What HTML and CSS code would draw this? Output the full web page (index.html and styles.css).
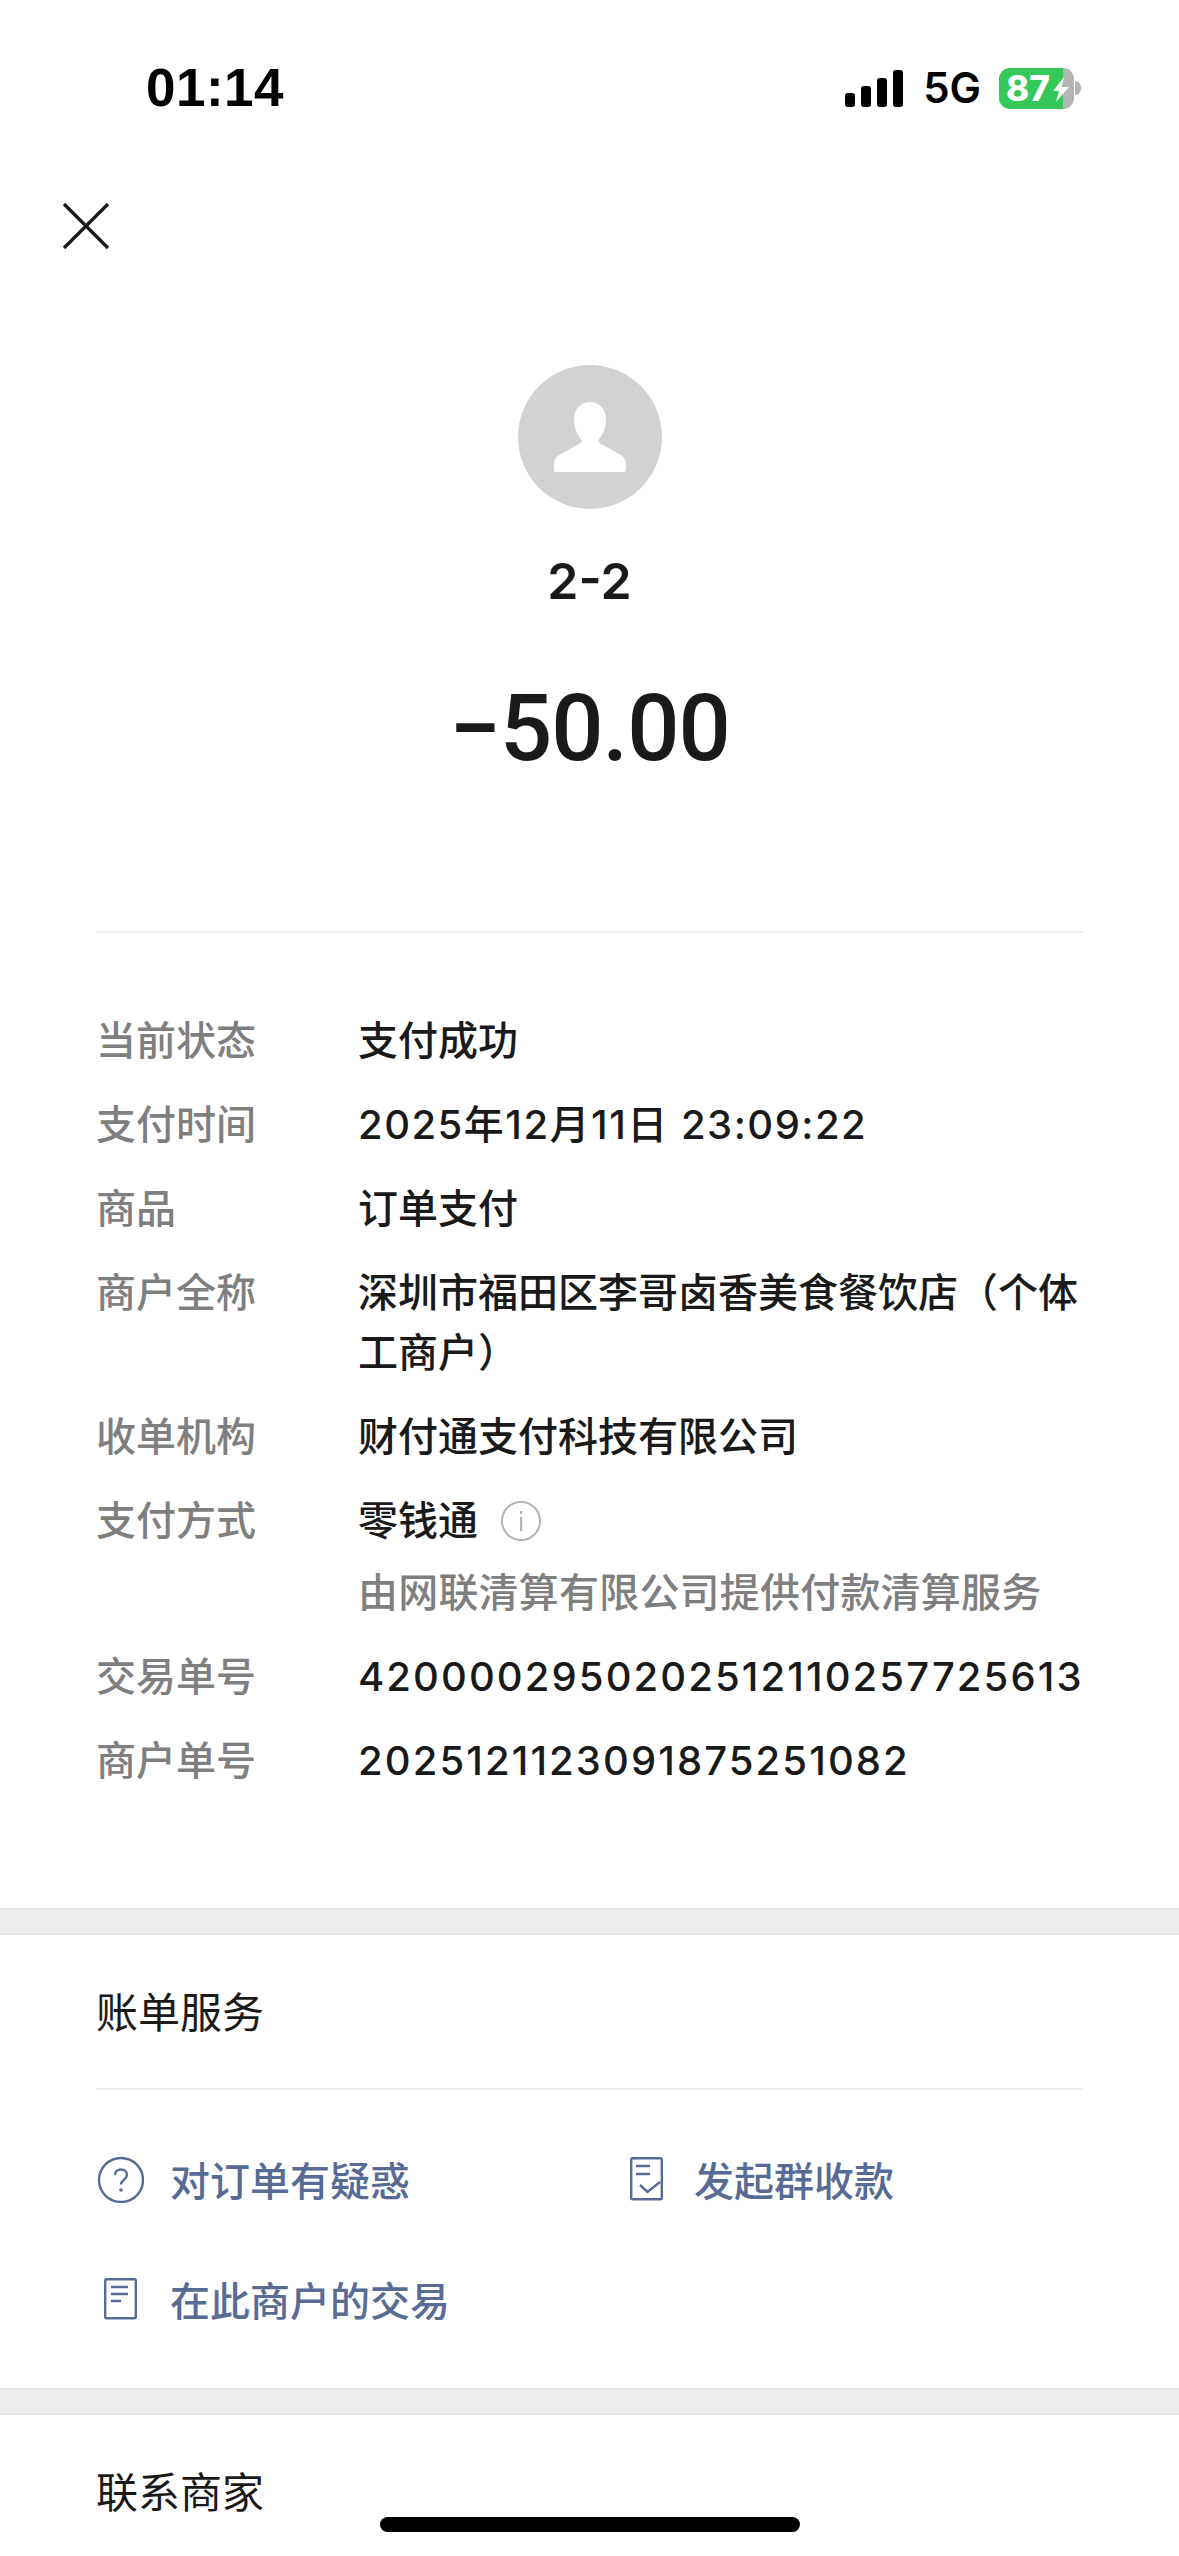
FILE: index.html
```html
<!DOCTYPE html>
<html lang="zh-CN">
<head>
  <meta charset="UTF-8" />
  <title>账单详情</title>
  <link rel="stylesheet" href="styles.css">
</head>
<body>
  <div class="page">
    <div class="status-bar">
      <span class="time">01:14</span>
      <div class="status-right">
        <svg class="signal" width="58" height="37" viewBox="0 0 58 37">
          <rect x="0" y="23" width="10" height="14" rx="3"/>
          <rect x="16" y="16" width="10" height="21" rx="3"/>
          <rect x="32" y="8" width="10" height="29" rx="3"/>
          <rect x="48" y="0" width="10" height="37" rx="3"/>
        </svg>
        <span class="network">5G</span>
        <div class="battery">
          <div class="battery-body">
            <span class="battery-level">87</span>
            <svg class="bolt" width="16" height="25" viewBox="0 0 16 25"><path d="M11 0 0 14h6L3 25 16 10H9z"/></svg>
          </div>
          <div class="battery-cap"></div>
        </div>
      </div>
    </div>

    <div class="nav">
      <svg width="50" height="50" viewBox="0 0 50 50"><path d="M3 3 47 47M47 3 3 47" stroke="#1a1a1a" stroke-width="3.4" fill="none"/></svg>
    </div>

    <div class="summary">
      <div class="avatar">
        <svg width="72" height="70" viewBox="0 0 72 70"><path d="M36 0c-9 0-16 7-16 17 0 9 3 15 7 20 1 2 0 4-2 5L7 52c-4 2-7 5-7 10v6c0 1 1 2 2 2h68c1 0 2-1 2-2v-6c0-5-3-8-7-10L47 42c-2-1-3-3-2-5 4-5 7-11 7-20C52 7 45 0 36 0z"/></svg>
      </div>
      <div class="payee">2-2</div>
      <div class="amount">−50.00</div>
    </div>

    <div class="details">
      <div class="row"><span class="label">当前状态</span><span class="value">支付成功</span></div>
      <div class="row"><span class="label">支付时间</span><span class="value date">2025年12月11日 23:09:22</span></div>
      <div class="row"><span class="label">商品</span><span class="value">订单支付</span></div>
      <div class="row"><span class="label">商户全称</span><span class="value">深圳市福田区李哥卤香美食餐饮店（个体工商户）</span></div>
      <div class="row"><span class="label">收单机构</span><span class="value">财付通支付科技有限公司</span></div>
      <div class="row">
        <span class="label">支付方式</span>
        <div class="value">
          <div class="pay-method">零钱通
            <svg width="40" height="40" viewBox="0 0 40 40"><circle cx="20" cy="20" r="19" fill="none" stroke="#b4b4b4" stroke-width="2"/><rect x="19" y="10" width="2.2" height="3" fill="#b4b4b4"/><rect x="19" y="16" width="2.2" height="14" fill="#b4b4b4"/></svg>
          </div>
          <div class="value-note">由网联清算有限公司提供付款清算服务</div>
        </div>
      </div>
      <div class="row"><span class="label">交易单号</span><span class="value num">4200002950202512110257725613</span></div>
      <div class="row"><span class="label">商户单号</span><span class="value num">2025121123091875251082</span></div>
    </div>

    <div class="band"></div>

    <div class="section">
      <div class="section-title">账单服务</div>
      <div class="links">
        <div class="link">
          <svg width="48" height="48" viewBox="0 0 48 48"><circle cx="25" cy="25" r="22" fill="none" stroke="#576b95" stroke-width="2.4"/><path d="M19 20c0-3.500 2.500-5.500 6-5.500s6 2.200 6 5.500c0 4.500-6 5-6 9.500" fill="none" stroke="#576b95" stroke-width="2.4"/><circle cx="25" cy="35" r="1.800" fill="#576b95"/></svg>
          <span>对订单有疑惑</span>
        </div>
        <div class="link">
          <svg width="48" height="44" viewBox="0 0 48 44"><rect x="11.200" y="1.200" width="30.600" height="41" rx="1.500" fill="none" stroke="#576b95" stroke-width="2.400"/><path d="M16 9h14M16 17h14" stroke="#576b95" stroke-width="2.400" fill="none"/><path d="M20 28l7.500 7L40 25" stroke="#576b95" stroke-width="2.400" fill="none"/></svg>
          <span>发起群收款</span>
        </div>
        <div class="link">
          <svg width="48" height="42" viewBox="0 0 48 42"><rect x="9.200" y="1.200" width="30.600" height="39" rx="1.500" fill="none" stroke="#576b95" stroke-width="2.400"/><path d="M15 9h17M15 16h17M15 23h10" stroke="#576b95" stroke-width="2.400" fill="none"/></svg>
          <span>在此商户的交易</span>
        </div>
      </div>
    </div>

    <div class="band"></div>

    <div class="section">
      <div class="section-title contact">联系商家</div>
    </div>

    <div class="home-indicator"></div>
  </div>
</body>
</html>
```

FILE: styles.css
```css
* {
  box-sizing: border-box;
}

body {
  margin: 0;
  background: #fff;
  font-family: Inter, "Noto Sans CJK SC", sans-serif;
  color: #1a1a1a;
}

.page {
  position: relative;
  width: 1179px;
  height: 2556px;
  overflow: hidden;
}

.status-bar {
  display: flex;
  justify-content: space-between;
  align-items: center;
  height: 112px;
  padding: 64px 98px 0 146px;
  color: #000;
}

.time {
  font-family: "Liberation Sans", sans-serif;
  font-size: 53px;
  font-weight: 700;
  line-height: 48px;
  letter-spacing: 0.5px;
}

.status-right {
  display: flex;
  align-items: center;
  gap: 20px;
}

.signal {
  fill: #000;
}

.network {
  font-size: 42px;
  font-weight: 600;
  line-height: 40px;
}

.battery {
  display: flex;
  align-items: center;
  margin-left: -2px;
}

.battery-body {
  position: relative;
  display: flex;
  align-items: center;
  width: 75px;
  height: 41px;
  padding-left: 7px;
  border-radius: 11px;
  background: linear-gradient(to right, #34c85a 64px, #b4b4b4 64px);
  color: #fff;
}

.battery-level {
  font-size: 35px;
  font-weight: 800;
  line-height: 41px;
}

/* sits across the edge of the charge level */
.bolt {
  position: absolute;
  left: 54px;
  top: 9px;
  fill: #fff;
}

.battery-cap {
  width: 6px;
  height: 14px;
  margin-left: 1px;
  border-radius: 0 7px 7px 0;
  background: #b4b4b4;
}

.nav {
  height: 253px;
  padding: 89px 0 0 61px;
}

.summary {
  display: flex;
  flex-direction: column;
  align-items: center;
  height: 568px;
  margin: 0 96px;
  border-bottom: 2px solid #ececec;
}

.avatar {
  display: flex;
  justify-content: center;
  align-items: center;
  width: 144px;
  height: 144px;
  border-radius: 50%;
  background: #d2d2d2;
  fill: #fff;
}

.payee {
  margin-top: 43px;
  font-size: 50px;
  font-weight: 600;
  line-height: 58px;
}

.amount {
  margin-top: 64px;
  font-family: Roboto, sans-serif;
  font-size: 92px;
  font-weight: 500;
  line-height: 110px;
  letter-spacing: -1px;
}

.details {
  display: flex;
  flex-direction: column;
  gap: 24px;
  height: 975px;
  padding: 78px 0 0 96px;
  font-size: 40px;
  line-height: 60px;
}

.row {
  display: flex;
}

.label {
  flex: none;
  width: 262px;
  color: #7f7f7f;
  font-weight: 500;
}

.value {
  width: 725px;
  font-weight: 500;
}

.value.date {
  letter-spacing: 1.5px;
}

.value.num {
  letter-spacing: 2.1px;
}

.pay-method {
  display: flex;
  align-items: center;
  gap: 23px;
}

.value-note {
  margin-top: 12px;
  color: #7f7f7f;
  letter-spacing: 0.2px;
}

.band {
  height: 27px;
  background: #eeeeee;
  border-top: 2px solid #e6e6e6;
  border-bottom: 2px solid #e6e6e6;
}

.section-title {
  display: flex;
  align-items: center;
  height: 155px;
  margin: 0 96px;
  padding-bottom: 5px;
  border-bottom: 2px solid #ececec;
  font-size: 42px;
}

.section-title.contact {
  padding-bottom: 7px;
  border-bottom: none;
}

.links {
  display: grid;
  grid-template-columns: 524px 1fr;
  align-content: start;
  row-gap: 72px;
  height: 298px;
  padding: 65px 0 0 96px;
}

.link {
  display: flex;
  align-items: center;
  gap: 26px;
  height: 48px;
  font-size: 40px;
  font-weight: 500;
  color: #576b95;
}

.home-indicator {
  position: absolute;
  left: 380px;
  top: 2517px;
  width: 420px;
  height: 15px;
  border-radius: 8px;
  background: #000;
}
```
